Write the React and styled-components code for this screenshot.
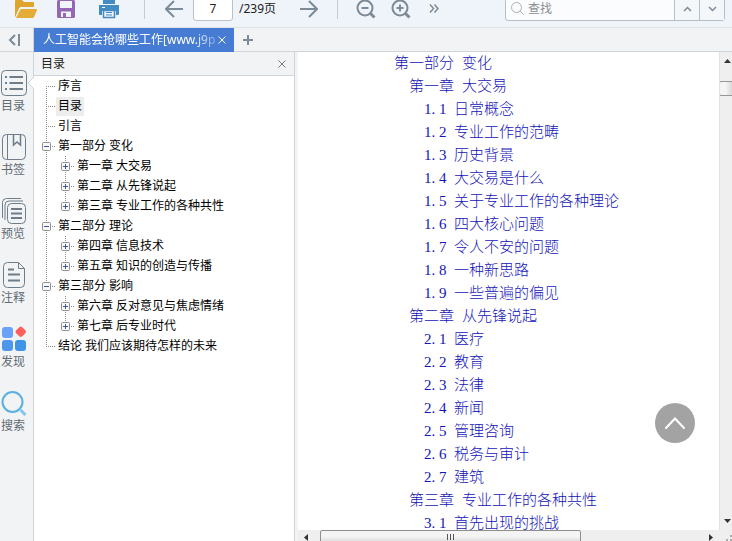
import React from "react";
import styled, { createGlobalStyle, css } from "styled-components";

const uiFont = `"Noto Sans", "Noto Sans CJK SC", sans-serif`;
const line = "#cfd4d9";
const iconGray = "#7d8a97";

const GlobalStyle = createGlobalStyle`
  * { box-sizing: border-box; }
  body { margin: 0; overflow: hidden; font: 12px/20px ${uiFont}; color: #222; }
  button, input { font: inherit; color: inherit; margin: 0; }
  button { border: 0; padding: 0; background: none; }
  ul, ol { list-style: none; margin: 0; padding: 0; }
  svg { display: block; flex: none; }
`;

const Page = styled.div`
  display: flex;
  flex-direction: column;
  height: 100vh;
  overflow: hidden;
  background: #f1f3f5;
`;

const Toolbar = styled.header`
  display: flex;
  align-items: center;
  flex: none;
  height: 28px;
  padding: 0 7px 10px 14px;
  border-bottom: 1px solid #dde0e4;
  background: #eef4f9;
`;

const ToolButton = styled.button`
  flex: none;
  margin-right: ${(p) => p.$gap || 0}px;
`;

const Divider = styled.span`
  flex: none;
  width: 1px;
  height: 20px;
  margin-right: ${(p) => p.$gap}px;
  background: #c5cbd1;
`;

const PageField = styled.label`
  display: flex;
  align-items: center;
  gap: 6px;
  flex: none;
  width: 95px;
  margin-right: 12px;
  white-space: nowrap;
`;

const PageInput = styled.input`
  width: 40px;
  height: 24px;
  padding: 0;
  border: 1px solid #b9c2ca;
  border-radius: 3px;
  background: #fff;
  text-align: center;
`;

const SearchBox = styled.div`
  display: flex;
  flex: none;
  width: 220px;
  height: 24px;
  margin-left: auto;
  border: 1px solid #b4bfc8;
  border-radius: 3px;
  background: #fafcfd;
`;

const SearchField = styled.label`
  display: flex;
  align-items: center;
  flex: 1;
  gap: 4px;
  min-width: 0;
  padding-left: 5px;
`;

const SearchInput = styled.input`
  flex: 1;
  min-width: 0;
  padding: 0;
  border: 0;
  background: none;
  &::placeholder { color: #8d8d8d; opacity: 1; }
`;

const SearchStep = styled.button`
  display: grid;
  place-items: center;
  width: 25px;
  border-left: 1px solid #b4bfc8;
  background: #f3f7fa;
`;

const TabBar = styled.nav`
  display: flex;
  flex: none;
  height: 24px;
  border-bottom: 1px solid ${line};
  background: #f1f3f5;
`;

const Collapse = styled.button`
  display: grid;
  place-items: center;
  width: 34px;
  height: 23px;
  padding-right: 6px;
  border-right: 1px solid ${line};
`;

const Tab = styled.div`
  display: flex;
  align-items: center;
  width: 200px;
  height: 24px;
  padding: 0 8px 0 9px;
  background: #467cd3;
  color: #fff;
`;

const TabTitle = styled.span`
  flex: 1;
  white-space: nowrap;
  mask-image: linear-gradient(to right, #000 86%, transparent 104%);
`;

const NewTab = styled.button`
  display: grid;
  place-items: center;
  width: 28px;
  height: 23px;
`;

const Body = styled.div`
  display: flex;
  flex: 1;
  min-height: 0;
`;

const Sidebar = styled.nav`
  display: flex;
  flex-direction: column;
  flex: none;
  width: 34px;
  padding-top: 16px;
  border-right: 1px solid ${line};
`;

const SideItem = styled.button`
  position: relative;
  display: flex;
  flex-direction: column;
  gap: 2px;
  height: 64px;
  padding-left: 1px;
  color: #626a72;
  line-height: 16px;
  text-align: left;
`;

const Pointer = styled.svg`
  position: absolute;
  right: -1px;
  top: 8px;
`;

const Panel = styled.aside`
  flex: none;
  width: 261px;
  border-right: 1px solid ${line};
  background: #fff;
`;

const PanelHeader = styled.header`
  display: flex;
  align-items: center;
  justify-content: space-between;
  height: 24px;
  padding: 0 8px 0 7px;
  border-bottom: 1px solid ${line};
  background: #f1f3f5;
`;

const PanelTitle = styled.h2`
  margin: 0;
  font: inherit;
`;

const dots = css`
  background-image: repeating-linear-gradient(#8a8a8a 0 1px, transparent 1px 2px);
  background-repeat: no-repeat;
`;

const TreeList = styled.ul`
  padding-left: ${(p) => (p.$nested ? 19 : 8)}px;
`;

const TreeItem = styled.li`
  ${dots}
  background-position: 4px ${(p) => (p.$first ? 10 : 0)}px;
  background-size: 1px ${(p) => (p.$last ? "10px" : "100%")};
`;

const TreeRow = styled.div`
  display: flex;
  align-items: center;
  height: 20px;
`;

const Branch = styled.span`
  display: flex;
  align-items: center;
  flex: none;
  width: 14px;
  height: 1px;
  padding-left: 4px;
  background: repeating-linear-gradient(to right, #8a8a8a 0 1px, transparent 1px 2px) 4px 0 / 9px 1px no-repeat;
`;

const Toggle = styled.button`
  flex: none;
  width: 9px;
  height: 9px;
  margin-left: -4px;
`;

const TreeLabel = styled.button`
  height: 19px;
  padding: 0 2px;
  background: ${(p) => (p.$selected ? "#ededed" : "none")};
  color: #000;
  line-height: 18px;
  white-space: nowrap;
`;

const Viewer = styled.main`
  display: grid;
  grid-template-columns: minmax(0, 1fr) 13px;
  grid-template-rows: minmax(0, 1fr) 11px;
  flex: 1;
  min-width: 0;
  margin-left: 3px;
`;

const Sheet = styled.section`
  position: relative;
  overflow: hidden;
  background: #fff;
`;

const Contents = styled.ol`
  padding-left: 96px;
  font: 15px/23px "Liberation Serif", "Noto Sans CJK SC", serif;
  font-weight: 300;
`;

const Entry = styled.li`
  height: 23px;
  padding-left: ${(p) => p.$level * 15}px;
`;

const EntryLink = styled.a`
  display: flex;
  gap: ${(p) => (p.$numbered ? 0 : 8)}px;
  color: #1414b8;
  text-decoration: none;
  white-space: nowrap;
`;

const NumberCell = styled.span`
  width: 15px;
`;

const BackToTop = styled.button`
  position: absolute;
  right: 24px;
  bottom: 87px;
  display: grid;
  place-items: center;
  width: 40px;
  height: 40px;
  border-radius: 50%;
  background: #a3a3a3;
`;

const VerticalBar = styled.div`
  display: flex;
  flex-direction: column;
  overflow: hidden;
  border-left: 1px solid #e3e3e3;
  background: #efefef;
`;

const HorizontalBar = styled.div`
  display: flex;
  overflow: hidden;
  background: #efefef;
`;

const ArrowButton = styled.button`
  display: grid;
  place-items: center;
  flex: none;
  width: ${(p) => (p.$short ? 16 : 14)}px;
  height: ${(p) => (p.$short ? 14 : 18)}px;
`;

const VerticalThumb = styled.div`
  flex: none;
  width: 16px;
  height: 15px;
  margin: 11px 0 auto -1px;
  border: 1px solid #979797;
  border-radius: 2px;
  background: linear-gradient(to right, #f5f5f5 40%, #cfcfd1);
`;

const HorizontalThumb = styled.div`
  display: flex;
  justify-content: center;
  width: 62%;
  height: 16px;
  margin: 0 auto 0 6px;
  padding-top: 3px;
  border: 1px solid #8f8f8f;
  border-radius: 2px;
  background: linear-gradient(#f4f4f4 40%, #cdcdd0);
`;

const Corner = styled.div`
  display: grid;
  place-items: end;
  background: #efefef;
`;

const Folder = () => (
  <svg width="24" height="20" viewBox="0 0 24 20">
    <path d="M1 18V2q0-1 1-1h6l2 2h9q1 0 1 1v4H7q-1 0-1.500 1L2 18z" fill="#dfa52b" />
    <path d="M1.500 18.500L5.500 9.500H22.500" stroke="#eef4f9" fill="none" />
    <path d="M2 19l4-8q.4-1 1.500-1H22q1.500 0 1 1.300L20 18q-.4 1-1.500 1z" fill="#e3ad38" />
  </svg>
);
const Save = () => (
  <svg width="18" height="20" viewBox="0 0 18 20">
    <rect width="18" height="18" y="1" rx="1.500" fill="#9466b4" />
    <rect x="3" y="2" width="12" height="7" fill="#eef4f9" />
    <path d="M4 12.500h10V18H4z" fill="#eef4f9" />
    <path d="M6 14h3v4H6z" fill="#9466b4" />
  </svg>
);
const Printer = () => (
  <svg width="22" height="20" viewBox="0 0 22 20">
    <path d="M5 0h12v5H5zM1 6h20q0 0 0 1v8q0 1-1 1h-2v-4H4v4H2q-1 0-1-1V6z" fill="#438bc2" />
    <path d="M5.500 11.500h11v7h-11z" fill="#eef4f9" stroke="#438bc2" strokeWidth="1.500" />
    <path d="M8 13.500h6M8 16h6" stroke="#438bc2" strokeWidth="1" />
    <path d="M4 8.500h3" stroke="#fff" />
  </svg>
);
const Arrow = ({ right }) => (
  <svg width="18" height="18" viewBox="0 0 18 18" fill="none" stroke={iconGray} strokeWidth="2">
    <path d={right ? "M0 9h16M9 1l8 8-8 8" : "M18 9H2M9 1L1 9l8 8"} />
  </svg>
);
const Zoom = ({ plus }) => (
  <svg width="20" height="20" viewBox="0 0 20 20" fill="none" stroke={iconGray} strokeWidth="2">
    <circle cx="9" cy="9" r="7.500" />
    <path d="M14.500 14.500l4 4" strokeWidth="3" />
    <path d={plus ? "M5.500 9h7M9 5.500v7" : "M5.500 9h7"} />
  </svg>
);
const Chevron = ({ up }) => (
  <svg width="9" height="6" viewBox="0 0 9 6" fill="none" stroke={iconGray} strokeWidth="1.500">
    <path d={up ? "M1 5l3.500-3.500L8 5" : "M1 1l3.500 3.500L8 1"} />
  </svg>
);
const Close = ({ color }) => (
  <svg width="8" height="8" viewBox="0 0 8 8" stroke={color}>
    <path d="M.5.5l7 7M7.500.5l-7 7" />
  </svg>
);
const Triangle = ({ d }) => (
  <svg width="7" height="7" viewBox="0 0 7 7" fill="#333"><path d={d} /></svg>
);

const SideSvg = ({ children }) => (
  <svg width="26" height="28" viewBox="0 0 26 28" fill="none" stroke="#6f7c89">{children}</svg>
);
const sideIcons = {
  目录: (
    <SideSvg>
      <rect x=".5" y="2.500" width="25" height="25" rx="4" />
      <path d="M8.500 9h13.500M8.500 15h13.500M8.500 21h13.500M4 9h2M4 15h2M4 21h2" strokeWidth="2" />
    </SideSvg>
  ),
  书签: (
    <SideSvg>
      <rect x="1.500" y="2.500" width="23" height="25" rx="4" />
      <path d="M6.500 2.500v25" />
      <path d="M12.500 3v10l3.500-3 3.500 3V3" strokeWidth="1.500" />
    </SideSvg>
  ),
  预览: (
    <SideSvg>
      <path d="M1.500 22V6.500q0-4 4-4H20M4 24V9q0-4 4-4H22" />
      <rect x="6.500" y="7.500" width="18" height="20" rx="4" fill="#f1f3f5" />
      <path d="M10 13h11M10 17.500h11M10 22h11" strokeWidth="2" />
    </SideSvg>
  ),
  注释: (
    <SideSvg>
      <path d="M17.500 2.500h-11q-4 0-4 4v17q0 4 4 4h13q4 0 4-4V8.500zM17.500 2.500v6h6" />
      <path d="M7 9.500h6M7 14.500h12M7 20.500h12" strokeWidth="2" />
    </SideSvg>
  ),
  发现: (
    <SideSvg>
      <g stroke="none">
        <rect x="1" y="3" width="11" height="11" rx="3" fill="#6aa2f7" />
        <rect x="1" y="16" width="11" height="11" rx="3" fill="#4f95ec" />
        <rect x="14" y="16" width="11" height="11" rx="3" fill="#3f94e6" />
        <rect x="15.500" y="3.500" width="8.500" height="8.500" rx="2" fill="#ff5c5c" transform="rotate(45 19.750 7.750)" />
      </g>
    </SideSvg>
  ),
  搜索: (
    <SideSvg>
      <g stroke="#5bb0df" strokeWidth="2">
        <circle cx="11.500" cy="14" r="10" />
        <path d="M19.500 22l5 5" strokeWidth="3" stroke="#82c6ea" />
      </g>
    </SideSvg>
  ),
};

const tree = [
  { title: "序言" },
  { title: "目录", selected: true },
  { title: "引言" },
  { title: "第一部分 变化", children: ["第一章 大交易", "第二章 从先锋说起", "第三章 专业工作的各种共性"] },
  { title: "第二部分 理论", children: ["第四章 信息技术", "第五章 知识的创造与传播"] },
  { title: "第三部分 影响", children: ["第六章 反对意见与焦虑情绪", "第七章 后专业时代"] },
  { title: "结论 我们应该期待怎样的未来" },
];

const contents = [
  [0, "第一部分", "变化"],
  [1, "第一章", "大交易"],
  [2, "1.1", "日常概念"],
  [2, "1.2", "专业工作的范畴"],
  [2, "1.3", "历史背景"],
  [2, "1.4", "大交易是什么"],
  [2, "1.5", "关于专业工作的各种理论"],
  [2, "1.6", "四大核心问题"],
  [2, "1.7", "令人不安的问题"],
  [2, "1.8", "一种新思路"],
  [2, "1.9", "一些普遍的偏见"],
  [1, "第二章", "从先锋说起"],
  [2, "2.1", "医疗"],
  [2, "2.2", "教育"],
  [2, "2.3", "法律"],
  [2, "2.4", "新闻"],
  [2, "2.5", "管理咨询"],
  [2, "2.6", "税务与审计"],
  [2, "2.7", "建筑"],
  [1, "第三章", "专业工作的各种共性"],
  [2, "3.1", "首先出现的挑战"],
];

const TreeToggle = ({ open, title }) => (
  <Toggle aria-label={title} aria-expanded={open}>
    <svg width="9" height="9" viewBox="0 0 9 9">
      <rect x=".5" y=".5" width="8" height="8" rx="1" fill="#f8f8f8" stroke="#8f8f8f" />
      <path d={open ? "M2 4.500h5" : "M2 4.500h5M4.500 2v5"} stroke="#3c56a5" />
    </svg>
  </Toggle>
);

const TreeNode = ({ node, first, last }) => (
  <TreeItem $first={first} $last={last}>
    <TreeRow>
      <Branch>{node.expandable && <TreeToggle open={!!node.children} title={node.title} />}</Branch>
      <TreeLabel $selected={node.selected}>{node.title}</TreeLabel>
    </TreeRow>
    {node.children && (
      <TreeList $nested>
        {node.children.map((title, i) => (
          <TreeNode key={title} node={{ title, expandable: true }} last={i === node.children.length - 1} />
        ))}
      </TreeList>
    )}
  </TreeItem>
);

const ContentsEntry = ({ level, label, title }) => {
  const numbered = level === 2;
  const [chapter, section] = label.split(".");
  return (
    <Entry $level={level}>
      <EntryLink href="#" $numbered={numbered}>
        {numbered ? (
          <>
            <NumberCell>{chapter}.</NumberCell>
            <NumberCell>{section}</NumberCell>
          </>
        ) : (
          <span>{label}</span>
        )}
        <span>{title}</span>
      </EntryLink>
    </Entry>
  );
};

export default function App() {
  return (
    <Page>
      <GlobalStyle />
      <Toolbar>
        <ToolButton aria-label="打开" $gap={19}><Folder /></ToolButton>
        <ToolButton aria-label="保存" $gap={23}><Save /></ToolButton>
        <ToolButton aria-label="打印" $gap={24}><Printer /></ToolButton>
        <Divider $gap={20} />
        <ToolButton aria-label="上一页" $gap={10}><Arrow /></ToolButton>
        <PageField>
          <PageInput defaultValue="7" aria-label="页码" />
          <span>/239页</span>
        </PageField>
        <ToolButton aria-label="下一页" $gap={19}><Arrow right /></ToolButton>
        <Divider $gap={18} />
        <ToolButton aria-label="缩小" $gap={15}><Zoom /></ToolButton>
        <ToolButton aria-label="放大" $gap={18}><Zoom plus /></ToolButton>
        <ToolButton aria-label="更多">
          <svg width="10" height="9" viewBox="0 0 10 9" fill="none" stroke={iconGray} strokeWidth="1.500">
            <path d="M1 .5l3.500 4L1 8.500M5.500.5l3.500 4-3.500 4" />
          </svg>
        </ToolButton>
        <SearchBox>
          <SearchField>
            <svg width="13" height="13" viewBox="0 0 13 13" fill="none" stroke="#aab2b9">
              <circle cx="5.500" cy="5.500" r="5" />
              <path d="M9 9l3.500 3.500" />
            </svg>
            <SearchInput placeholder="查找" aria-label="查找" />
          </SearchField>
          <SearchStep aria-label="查找上一个"><Chevron up /></SearchStep>
          <SearchStep aria-label="查找下一个"><Chevron /></SearchStep>
        </SearchBox>
      </Toolbar>

      <TabBar>
        <Collapse aria-label="收起侧栏">
          <svg width="12" height="12" viewBox="0 0 12 12" fill="none" stroke={iconGray} strokeWidth="2">
            <path d="M7 1L2 6l5 5M11 0v12" />
          </svg>
        </Collapse>
        <Tab>
          <TabTitle>人工智能会抢哪些工作[www.j9p</TabTitle>
          <ToolButton aria-label="关闭标签"><Close color="#fff" /></ToolButton>
        </Tab>
        <NewTab aria-label="新建标签">
          <svg width="10" height="10" viewBox="0 0 10 10" stroke={iconGray} strokeWidth="2">
            <path d="M0 5h10M5 0v10" />
          </svg>
        </NewTab>
      </TabBar>

      <Body>
        <Sidebar>
          {Object.entries(sideIcons).map(([name, icon], i) => (
            <SideItem key={name}>
              {icon}
              <span>{name}</span>
              {i === 0 && (
                <Pointer width="7" height="14" viewBox="0 0 7 14">
                  <path d="M7 1L1 7l6 6" fill="#fff" stroke={line} />
                </Pointer>
              )}
            </SideItem>
          ))}
        </Sidebar>

        <Panel>
          <PanelHeader>
            <PanelTitle>目录</PanelTitle>
            <ToolButton aria-label="关闭目录"><Close color="#737b83" /></ToolButton>
          </PanelHeader>
          <TreeList>
            {tree.map((node, i) => (
              <TreeNode
                key={node.title}
                node={{ ...node, expandable: !!node.children }}
                first={i === 0}
                last={i === tree.length - 1}
              />
            ))}
          </TreeList>
        </Panel>

        <Viewer>
          <Sheet>
            <Contents>
              {contents.map(([level, label, title]) => (
                <ContentsEntry key={label} level={level} label={label} title={title} />
              ))}
            </Contents>
            <BackToTop aria-label="返回顶部">
              <svg width="20" height="12" viewBox="0 0 20 12" fill="none" stroke="#fff" strokeWidth="2" strokeLinecap="round">
                <path d="M1 11l9-9.500 9 9.500" />
              </svg>
            </BackToTop>
          </Sheet>
          <VerticalBar>
            <ArrowButton aria-label="向上滚动"><Triangle d="M0 5l3.500-4L7 5z" /></ArrowButton>
            <VerticalThumb />
            <ArrowButton aria-label="向下滚动"><Triangle d="M0 1l3.500 4L7 1z" /></ArrowButton>
          </VerticalBar>
          <HorizontalBar>
            <ArrowButton $short aria-label="向左滚动"><Triangle d="M5 0L1 3.500 5 7z" /></ArrowButton>
            <HorizontalThumb>
              <svg width="9" height="6" viewBox="0 0 9 6" stroke="#555">
                <path d="M1.500 0v6M4.500 0v6M7.500 0v6" />
              </svg>
            </HorizontalThumb>
            <ArrowButton $short aria-label="向右滚动"><Triangle d="M1 0l4 3.500L1 7z" /></ArrowButton>
          </HorizontalBar>
          <Corner>
            <svg width="6" height="6" viewBox="0 0 6 6" fill="#aaa">
              <path d="M4 0h2v2H4zM0 4h2v2H0zM4 4h2v2H4z" />
            </svg>
          </Corner>
        </Viewer>
      </Body>
    </Page>
  );
}
